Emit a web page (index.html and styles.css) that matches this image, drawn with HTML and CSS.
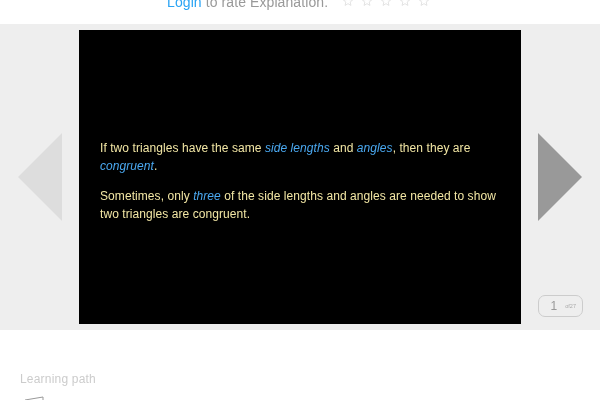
FILE: index.html
```html
<!DOCTYPE html>
<html lang="en">
<head>
    <meta charset="UTF-8">
    <title>Explanation</title>
    <link rel="stylesheet" href="styles.css">
</head>
<body>
    <div class="rate-bar">
        <span class="rate-text"><a href="#">Login</a> to rate Explanation.</span>
        <span class="stars">
            <svg viewBox="0 0 12 12"><path d="M6 .6 7.6 4.4 11.6 4.7 8.6 7.3 9.5 11.3 6 9.2 2.5 11.3 3.4 7.3.4 4.7 4.4 4.4Z"/></svg>
            <svg viewBox="0 0 12 12"><path d="M6 .6 7.6 4.4 11.6 4.7 8.6 7.3 9.5 11.3 6 9.2 2.5 11.3 3.4 7.3.4 4.7 4.4 4.4Z"/></svg>
            <svg viewBox="0 0 12 12"><path d="M6 .6 7.6 4.4 11.6 4.7 8.6 7.3 9.5 11.3 6 9.2 2.5 11.3 3.4 7.3.4 4.7 4.4 4.4Z"/></svg>
            <svg viewBox="0 0 12 12"><path d="M6 .6 7.6 4.4 11.6 4.7 8.6 7.3 9.5 11.3 6 9.2 2.5 11.3 3.4 7.3.4 4.7 4.4 4.4Z"/></svg>
            <svg viewBox="0 0 12 12"><path d="M6 .6 7.6 4.4 11.6 4.7 8.6 7.3 9.5 11.3 6 9.2 2.5 11.3 3.4 7.3.4 4.7 4.4 4.4Z"/></svg>
        </span>
    </div>

    <section class="player">
        <div class="side">
            <svg class="arrow" viewBox="0 0 44 88"><polygon class="arrow-prev" points="44,0 44,88 0,44"/></svg>
        </div>
        <div class="slide">
            <div class="slide-text">
                <p>If two triangles have the same <em>side lengths</em> and <em>angles</em>, then they are <em>congruent</em>.</p>
                <p>Sometimes, only <em>three</em> of the side lengths and angles are needed to show two triangles are congruent.</p>
            </div>
        </div>
        <div class="side side-right">
            <svg class="arrow" viewBox="0 0 44 88"><polygon class="arrow-next" points="0,0 44,44 0,88"/></svg>
            <div class="counter"><span class="counter-num">1</span><span class="counter-of">of27</span></div>
        </div>
    </section>

    <section class="path">
        <h2>Learning path</h2>
        <svg class="path-icon" viewBox="0 0 20 12"><path d="M1 4 19 1V12"/></svg>
    </section>
</body>
</html>
```

FILE: styles.css
```css
html, body { height: 400px; overflow: hidden; }
body { margin: 0; font-family: "Liberation Sans", Arial, sans-serif; background-color: #FFF; color: #999; }

/* own layer = greyscale text instead of lcd */
.rate-text, .slide-text, .counter, .path h2 { will-change: transform; }

.rate-bar { height: 24px; overflow: hidden; display: flex; padding-left: 167px; }
.rate-text { font-size: 14px; letter-spacing: .09px; line-height: 16px; margin-top: -6px; white-space: nowrap; }
.rate-text a { color: #2AA4F4; text-decoration: none; }
.stars { display: flex; gap: 9px; margin: -4px 0 0 15px; }
.stars svg { width: 10px; height: 10px; fill: none; stroke: #DDD; stroke-width: 1; }

.player { height: 306px; background-color: #EEE; display: flex; padding: 6px 0; box-sizing: border-box; }
.side { width: 79px; display: flex; align-items: center; justify-content: flex-start; padding-left: 18px; box-sizing: border-box; }
.side-right { position: relative; padding-left: 17px; }
.arrow { width: 44px; height: 88px; }
.arrow-prev { fill: #DDD; }
.arrow-next { fill: #999; }

.slide { width: 442px; height: 294px; box-sizing: border-box; background-color: #000; padding: 109px 21px 0; font-size: 12px; letter-spacing: .07px; line-height: 18px; color: #F2E6A4; }
.slide p { margin: 0 0 12px; }
.slide em { color: #4AA8F0; }

.counter { position: absolute; left: 17px; top: 265px; width: 45px; height: 22px; box-sizing: border-box; border: 1px solid #CCC; border-radius: 7px; display: flex; align-items: center; justify-content: flex-end; gap: 8px; padding-right: 6px; }
.counter-num { font-size: 12px; color: #999; }
.counter-of { font-size: 5.5px; color: #AAA; }

.path { padding: 42px 20px 0; }
.path h2 { margin: 0; font-size: 12px; letter-spacing: .2px; line-height: 14px; font-weight: normal; color: #CCC; }
.path-icon { display: block; width: 20px; height: 12px; margin: 10px 0 0 4px; fill: none; stroke: #999; stroke-width: 1; }
```
